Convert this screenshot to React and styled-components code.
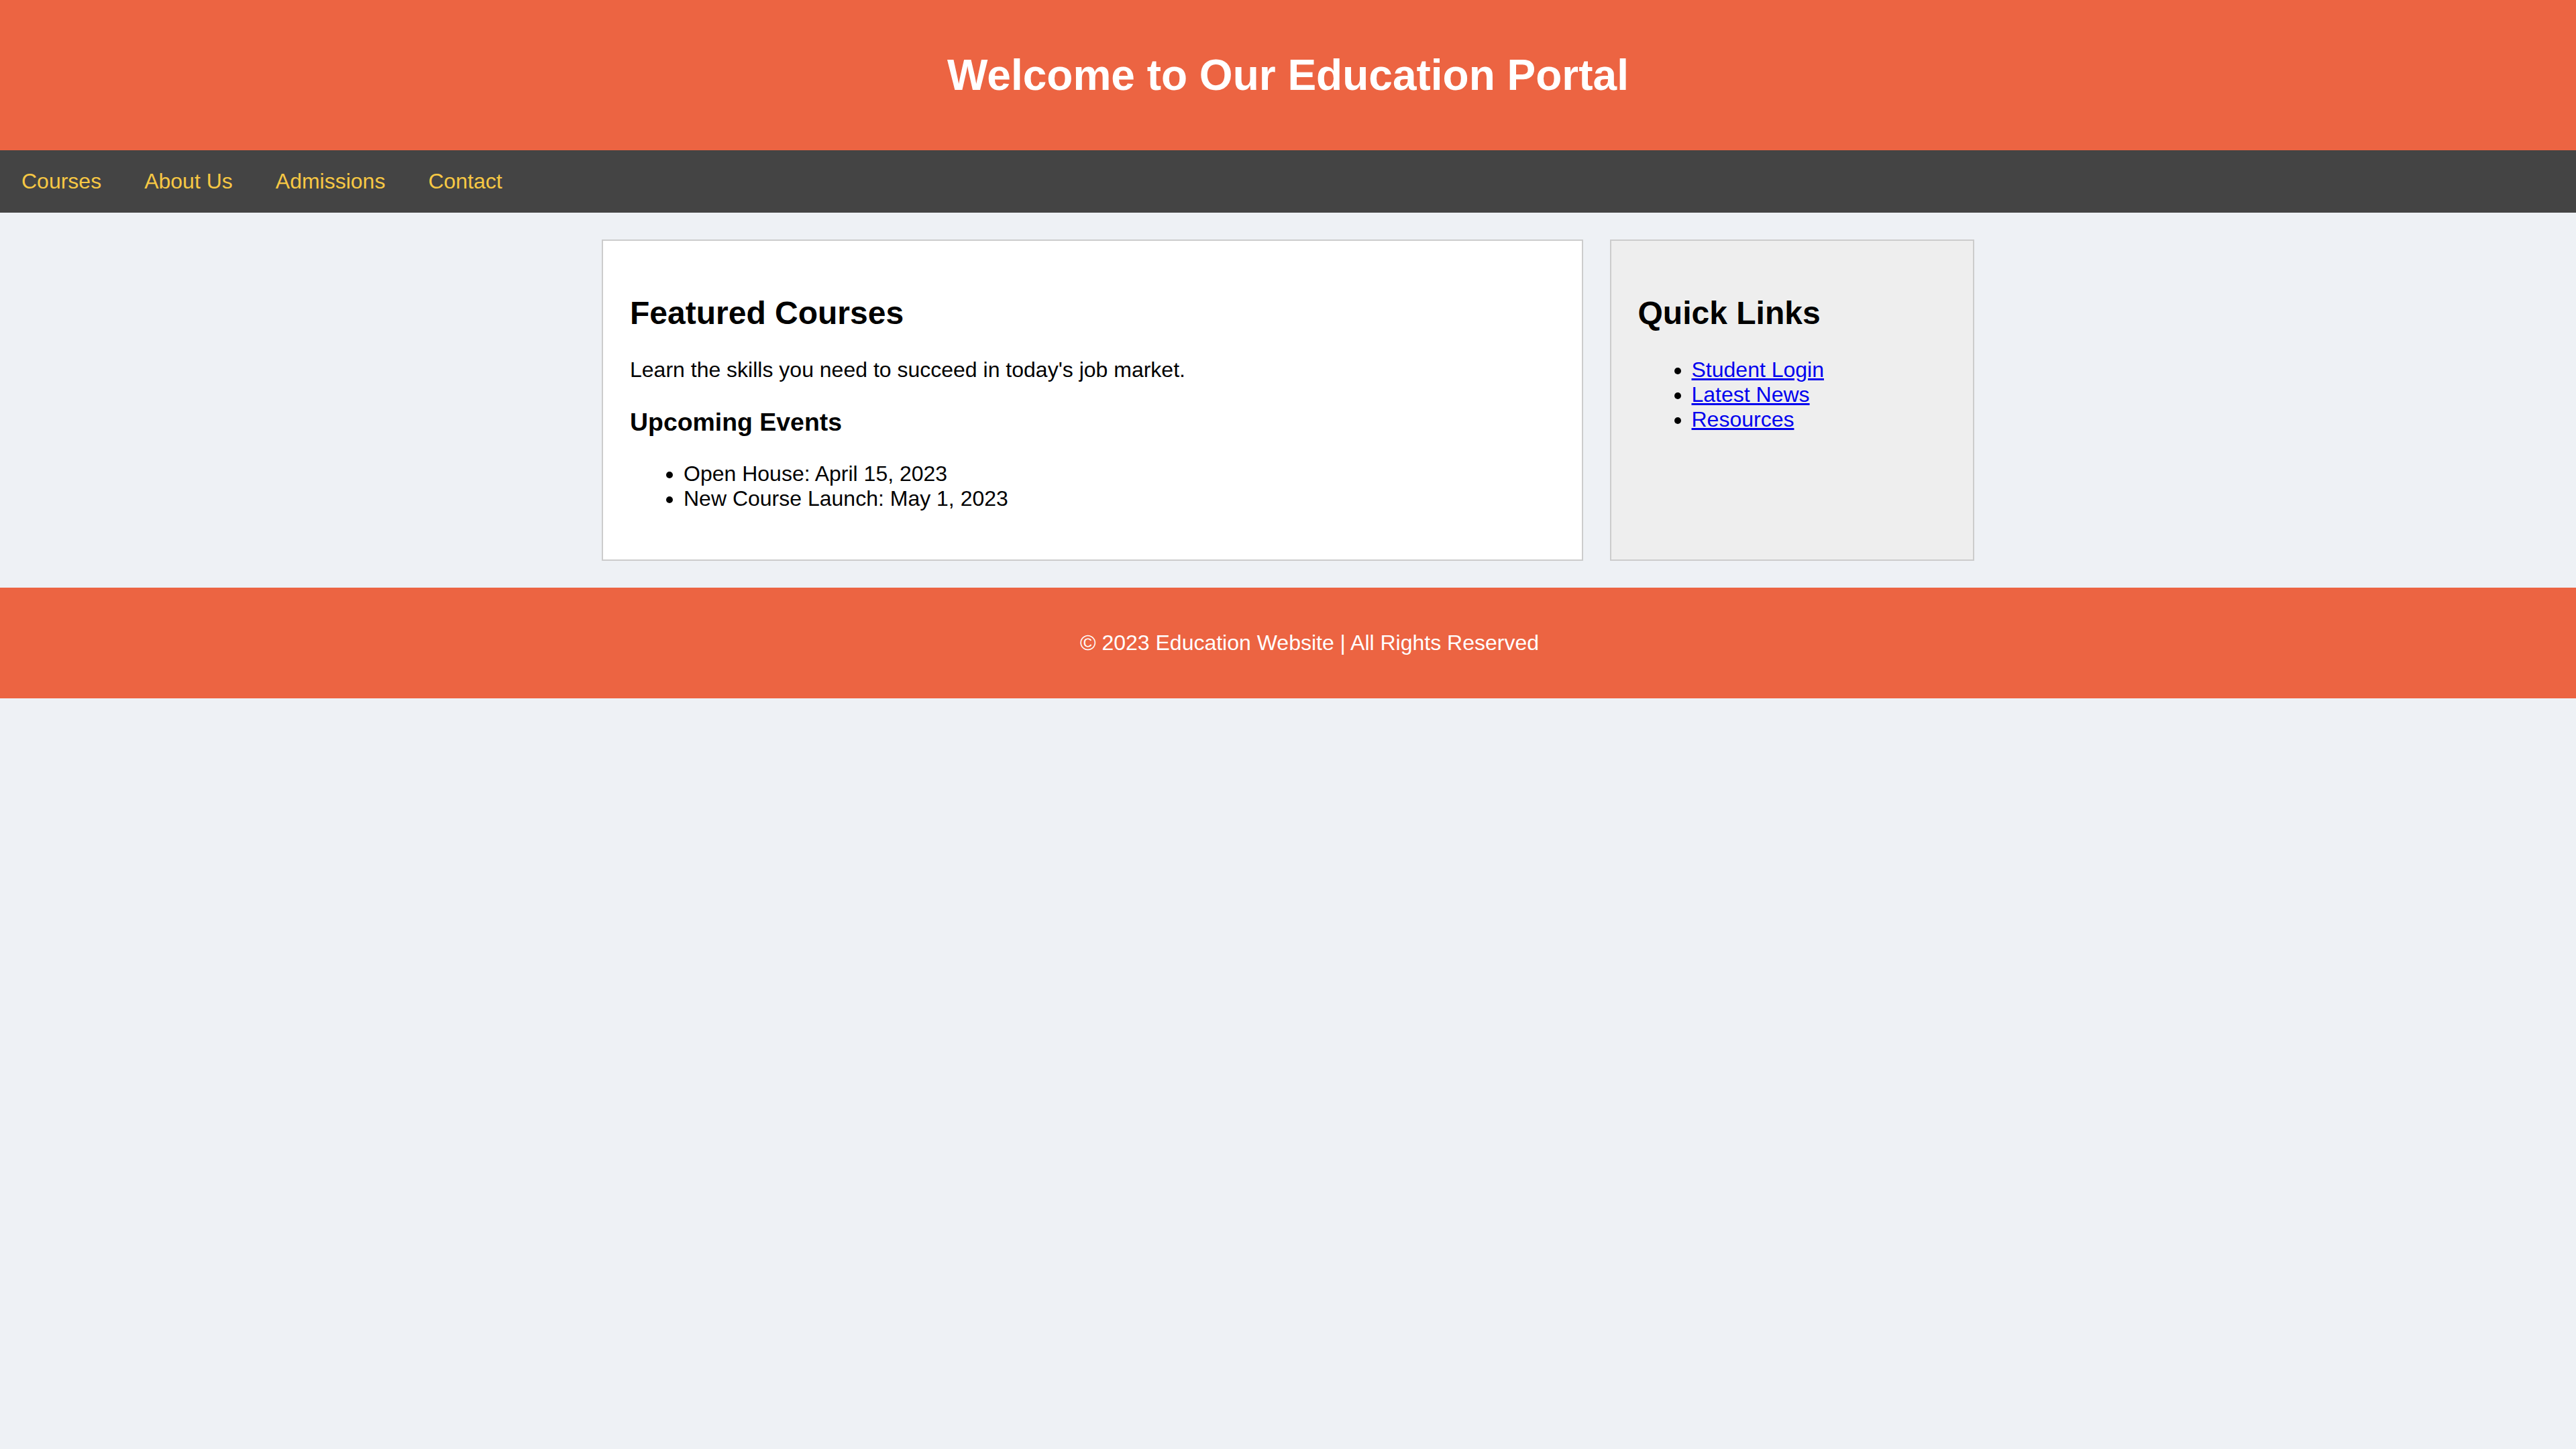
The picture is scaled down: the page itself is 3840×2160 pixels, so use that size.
import React from 'react';
import styled, { createGlobalStyle } from 'styled-components';

const GlobalStyle = createGlobalStyle`
    html, body {
        margin: 0;
        padding: 0;
    }
    body {
        background-color: #eef1f5;
        font-family: 'Liberation Sans', Arial, sans-serif;
        font-size: 32px;
        color: #000;
    }
`;

const Header = styled.header`
    background-color: #ec6442;
    color: white;
    text-align: center;
    padding: 32px;
`;

const Title = styled.h1`
    font-size: 64px;
    margin: 0.67em 0;
`;

const Nav = styled.nav`
    background-color: #444;
    display: flex;
`;

const NavLink = styled.a`
    display: block;
    color: #f7c844;
    text-decoration: none;
    padding: 28px 32px;
    font-size: 32px;
`;

const Main = styled.main`
    padding: 40px 0;
`;

const Container = styled.div`
    width: 2046px;
    margin: 0 auto;
    display: flex;
    gap: 40px;
`;

const Card = styled.section`
    flex: ${props => (props.side ? 1 : 3)} 1 0;
    padding: 40px;
    border: 2px solid #ccc;
    background-color: ${props => (props.side ? '#eee' : '#fff')};
`;

const Heading = styled.h2`
    font-size: 48px;
    margin: 0.83em 0;
`;

const SubHeading = styled.h3`
    font-size: 37.44px;
    margin: 1em 0;
`;

const Text = styled.p`
    margin: 32px 0;
`;

const List = styled.ul`
    margin: 32px 0;
    padding-left: 80px;
`;

const Link = styled.a`
    color: #0000ee;
    text-decoration: underline;
`;

// the text sits a little right of centre in the original
const Footer = styled.footer`
    background-color: #ec6442;
    color: white;
    text-align: center;
    padding: 32px 0 32px 64px;
`;

const App = () => {
    const navItems = ['Courses', 'About Us', 'Admissions', 'Contact'];
    const quickLinks = ['Student Login', 'Latest News', 'Resources'];

    return (
        <>
            <GlobalStyle />
            <Header>
                <Title>Welcome to Our Education Portal</Title>
            </Header>
            <Nav>
                {navItems.map(item => (
                    <NavLink key={item} href="#">{item}</NavLink>
                ))}
            </Nav>
            <Main>
                <Container>
                    <Card>
                        <Heading>Featured Courses</Heading>
                        <Text>Learn the skills you need to succeed in today's job market.</Text>
                        <SubHeading>Upcoming Events</SubHeading>
                        <List>
                            <li>Open House: April 15, 2023</li>
                            <li>New Course Launch: May 1, 2023</li>
                        </List>
                    </Card>
                    <Card side>
                        <Heading>Quick Links</Heading>
                        <List>
                            {quickLinks.map(link => (
                                <li key={link}><Link href="#">{link}</Link></li>
                            ))}
                        </List>
                    </Card>
                </Container>
            </Main>
            <Footer>
                <Text>&copy; 2023 Education Website | All Rights Reserved</Text>
            </Footer>
        </>
    );
};

export default App;
